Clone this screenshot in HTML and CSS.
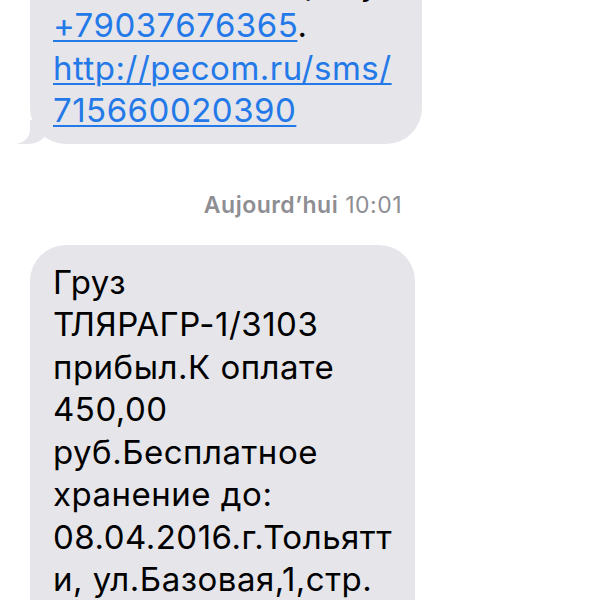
FILE: index.html
```html
<!DOCTYPE html>
<html lang="ru">
<head>
  <meta charset="UTF-8">
  <title>Сообщения</title>
  <link rel="stylesheet" href="styles.css">
</head>
<body>
  <div class="thread">
    <div class="bubble bubble-first tail">
      Информация о заказе по телефону <a href="tel:+79037676365">+79037676365</a>.
      <a href="http://pecom.ru/sms/715660020390">http://pecom.ru/sms/<wbr>715660020390</a>
    </div>

    <div class="stamp"><b>Aujourd’hui</b> 10:01</div>

    <div class="bubble bubble-second">
      Груз ТЛЯРАГР-1/3103 прибыл.К оплате 450,00 руб.Бесплатное хранение до: 08.04.2016.г.Тольятти, ул.Базовая,1,стр. 20 <a href="http://pecom.ru/sms/">http://pecom.ru/sms/</a>
    </div>
  </div>
</body>
</html>
```

FILE: styles.css
```css
body {
  margin: 0;
  background: #fff;
  font-family: Inter, "Noto Sans", sans-serif;
  overflow: hidden;
}
.thread {
  padding-left: 30px;
}
.bubble {
  position: relative;
  box-sizing: border-box;
  background: #e5e5ea;
  color: #000;
  font-size: 33px;
  line-height: 42.5px;
  letter-spacing: 0.5px;
  padding: 16px 30px 12px 23px;
  border-radius: 36px;
  overflow-wrap: anywhere;
}
.bubble a {
  color: #2479e8;
  text-decoration: underline;
  text-decoration-thickness: 2px;
  text-underline-offset: 3px;
}
.bubble-first {
  width: 392px;
  margin-top: -97px;
}
.bubble-second {
  width: 385px;
  padding-right: 22px;
  margin-top: 27px;
}
.tail::before {
  content: "";
  position: absolute;
  left: -13px;
  bottom: 0;
  width: 30px;
  height: 24px;
  background: #e5e5ea;
  border-bottom-right-radius: 20px 14px;
}
.tail::after {
  content: "";
  position: absolute;
  left: -30px;
  bottom: 0;
  width: 30px;
  height: 26px;
  background: #fff;
  border-bottom-right-radius: 16px 14px;
}
.stamp {
  width: 372px;
  margin-top: 48px;
  text-align: right;
  font-size: 23px;
  line-height: 26px;
  letter-spacing: 0.5px;
  color: #8e8e93;
}
.stamp b {
  font-weight: 600;
}
```
